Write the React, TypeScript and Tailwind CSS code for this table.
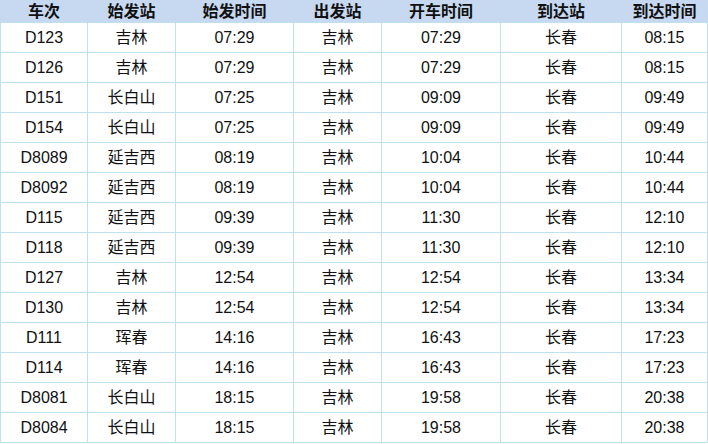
import React from 'react';

const rows: string[][] = [
  ['D123', '吉林', '07:29', '吉林', '07:29', '长春', '08:15'],
  ['D126', '吉林', '07:29', '吉林', '07:29', '长春', '08:15'],
  ['D151', '长白山', '07:25', '吉林', '09:09', '长春', '09:49'],
  ['D154', '长白山', '07:25', '吉林', '09:09', '长春', '09:49'],
  ['D8089', '延吉西', '08:19', '吉林', '10:04', '长春', '10:44'],
  ['D8092', '延吉西', '08:19', '吉林', '10:04', '长春', '10:44'],
  ['D115', '延吉西', '09:39', '吉林', '11:30', '长春', '12:10'],
  ['D118', '延吉西', '09:39', '吉林', '11:30', '长春', '12:10'],
  ['D127', '吉林', '12:54', '吉林', '12:54', '长春', '13:34'],
  ['D130', '吉林', '12:54', '吉林', '12:54', '长春', '13:34'],
  ['D111', '珲春', '14:16', '吉林', '16:43', '长春', '17:23'],
  ['D114', '珲春', '14:16', '吉林', '16:43', '长春', '17:23'],
  ['D8081', '长白山', '18:15', '吉林', '19:58', '长春', '20:38'],
  ['D8084', '长白山', '18:15', '吉林', '19:58', '长春', '20:38'],
];

const headers = ['车次', '始发站', '始发时间', '出发站', '开车时间', '到达站', '到达时间'];
const widths = [87, 88, 118, 88, 119, 121, 86];

export default function App() {
  return (
    <div className="w-[708px] h-[444px] bg-white overflow-hidden font-['Liberation_Sans','Noto_Sans_CJK_SC',sans-serif]">
      <table className="table-fixed border-collapse w-[707px] text-[16px] text-[#111]">
        <colgroup>
          {widths.map((w, i) => (
            <col key={i} style={{ width: w }} />
          ))}
        </colgroup>
        <thead>
          <tr className="h-[22px] bg-[#c6d9f1]">
            {headers.map((h) => (
              <th key={h} className="border border-[#c6d9f1] border-b-[#bfe0ee] p-0 font-bold text-center leading-[21px]">
                {h}
              </th>
            ))}
          </tr>
        </thead>
        <tbody>
          {rows.map((r) => (
            <tr key={r[0]} className="h-[30px]">
              {r.map((c, i) => (
                <td key={i} className="border border-[#bfe0ee] p-0 text-center leading-[20px]">
                  {c}
                </td>
              ))}
            </tr>
          ))}
        </tbody>
      </table>
    </div>
  );
}
